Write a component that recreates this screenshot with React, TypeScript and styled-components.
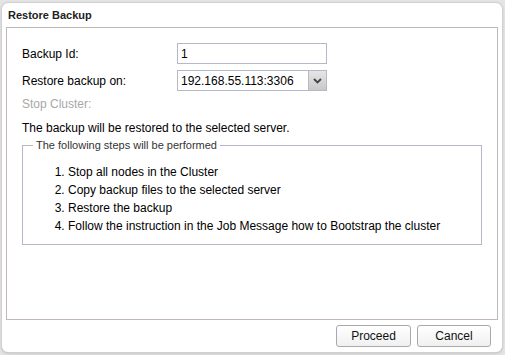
import React from "react";
import styled, { createGlobalStyle } from "styled-components";

const Global = createGlobalStyle`
  html, body { margin: 0; padding: 0; }
  body {
    background: #e4e4e4;
    font-family: "Liberation Sans", Arial, sans-serif;
    width: 505px;
    height: 355px;
    overflow: hidden;
  }
`;

const Dialog = styled.div`
  box-sizing: border-box;
  margin: 3px 0 0 2px;
  width: 500px;
  height: 349px;
  background: #ffffff;
  border-radius: 6px;
  box-shadow: 0 0 0 1px #d0d0d0, 0 1px 3px rgba(0, 0, 0, 0.25);
  display: flex;
  flex-direction: column;
`;

const TitleBar = styled.div`
  height: 24px;
  padding-left: 6px;
  display: flex;
  align-items: center;
  font-size: 11px;
  font-weight: bold;
  color: #222;
`;

const Body = styled.div`
  box-sizing: border-box;
  margin: 0 4px;
  height: 293px;
  border: 1px solid #c2b7b7;
  padding: 15px 15px 0 15px;
  color: #000;
  font-size: 12px;
`;

const FormRow = styled.div`
  display: flex;
  align-items: center;
  height: 21px;
  margin-bottom: 6px;
`;

const Label = styled.div<{ $disabled?: boolean }>`
  width: 155px;
  color: ${(p) => (p.$disabled ? "#a8a8a8" : "#000")};
  line-height: 14px;
`;

const TextBox = styled.div`
  box-sizing: border-box;
  width: 150px;
  height: 21px;
  border: 1px solid #b5b8c8;
  background: #fff;
  padding: 0 3px;
  display: flex;
  align-items: center;
  font-size: 12px;
`;

const Combo = styled.div`
  box-sizing: border-box;
  width: 150px;
  height: 21px;
  border: 1px solid #b5b8c8;
  background: #fff;
  display: flex;
`;

const ComboText = styled.div`
  flex: 1;
  display: flex;
  align-items: center;
  padding: 0 3px;
`;

const Trigger = styled.div`
  width: 17px;
  border-left: 1px solid #b5b8c8;
  background: linear-gradient(#e6e6e6, #c8c8c8);
  display: flex;
  align-items: center;
  justify-content: center;
`;

const DisabledRow = styled.div`
  height: 14px;
  line-height: 14px;
  color: #a8a8a8;
  margin-top: 6px;
`;

const Notice = styled.div`
  height: 14px;
  line-height: 14px;
  margin-top: 10px;
`;

const Steps = styled.fieldset`
  box-sizing: border-box;
  margin: 3px 0 0 0;
  width: 460px;
  border: 1px solid #b5b8c8;
  padding: 0 0 9px 0;
`;

const Legend = styled.legend`
  margin-left: 10px;
  padding: 0 3px;
  font-size: 11px;
  line-height: 14px;
  color: #333;
`;

const StepList = styled.ol`
  margin: 11px 0 0 0;
  padding: 0 0 0 45px;
  font-size: 12px;
  line-height: 18px;
`;

const Footer = styled.div`
  flex: 1;
  display: flex;
  justify-content: flex-end;
  align-items: flex-start;
  gap: 6px;
  padding: 5px 11px 0 0;
`;

const Button = styled.button<{ $w: number }>`
  box-sizing: border-box;
  width: ${(p) => p.$w}px;
  height: 22px;
  border: 1px solid #a9a9a9;
  border-radius: 3px;
  background: linear-gradient(#ffffff, #f0f0f0);
  font-family: "Liberation Sans", Arial, sans-serif;
  font-size: 12px;
  color: #111;
  padding: 0;
`;

const Chevron = () => (
  <svg width="9" height="6" viewBox="0 0 9 6">
    <path d="M1 1 L4.5 4.5 L8 1" fill="none" stroke="#444" strokeWidth="1.8" />
  </svg>
);

export default function App() {
  const steps = [
    "Stop all nodes in the Cluster",
    "Copy backup files to the selected server",
    "Restore the backup",
    "Follow the instruction in the Job Message how to Bootstrap the cluster",
  ];
  return (
    <>
      <Global />
      <Dialog>
        <TitleBar>Restore Backup</TitleBar>
        <Body>
          <FormRow>
            <Label>Backup Id:</Label>
            <TextBox>1</TextBox>
          </FormRow>
          <FormRow>
            <Label>Restore backup on:</Label>
            <Combo>
              <ComboText>192.168.55.113:3306</ComboText>
              <Trigger>
                <Chevron />
              </Trigger>
            </Combo>
          </FormRow>
          <DisabledRow>Stop Cluster:</DisabledRow>
          <Notice>The backup will be restored to the selected server.</Notice>
          <Steps>
            <Legend>The following steps will be performed</Legend>
            <StepList>
              {steps.map((s) => (
                <li key={s}>{s}</li>
              ))}
            </StepList>
          </Steps>
        </Body>
        <Footer>
          <Button $w={75}>Proceed</Button>
          <Button $w={74}>Cancel</Button>
        </Footer>
      </Dialog>
    </>
  );
}
